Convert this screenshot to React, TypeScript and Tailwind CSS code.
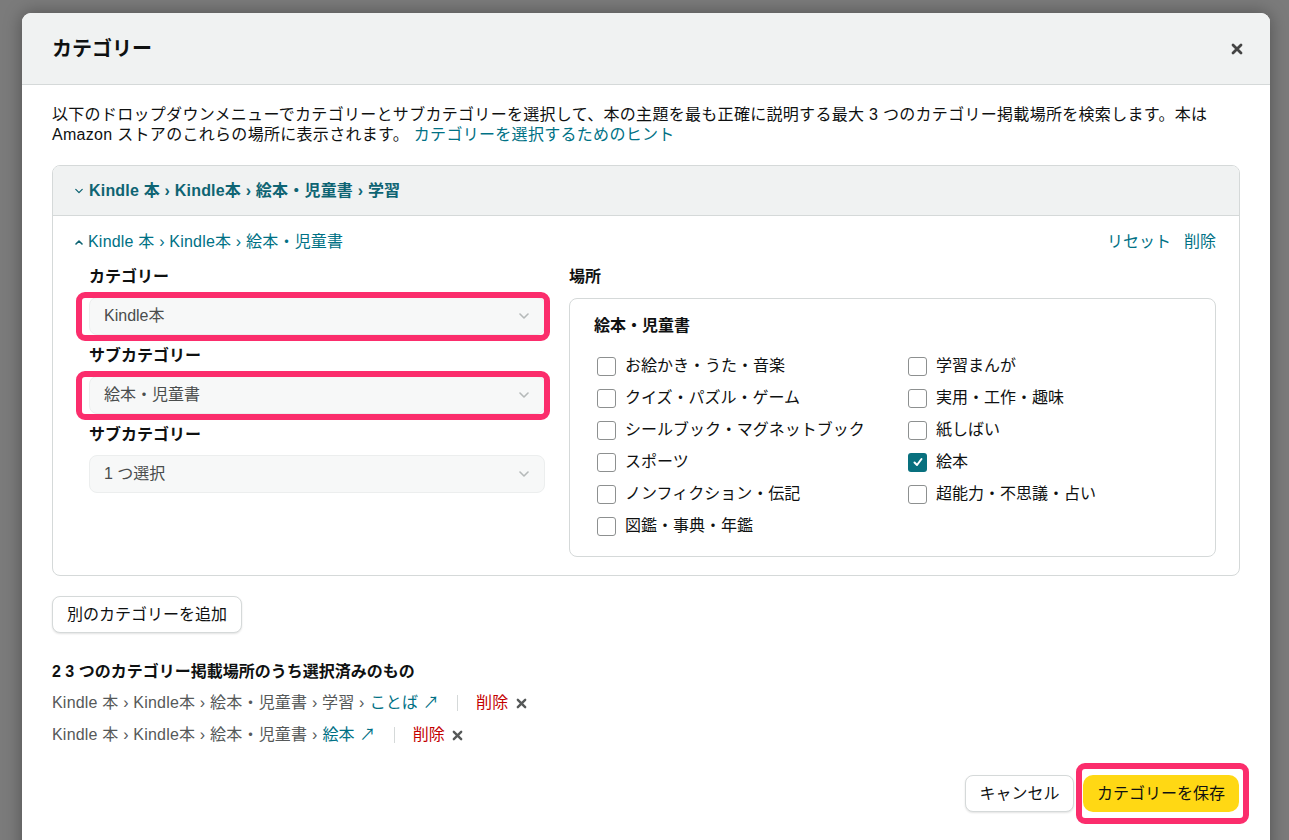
import React from "react";

const FONT = { fontFamily: '"Liberation Sans", "Noto Sans CJK JP", sans-serif' };

function ChevronDown({ className = "" }: { className?: string }) {
  return (
    <svg width="10" height="6" viewBox="0 0 10 6" className={className}>
      <path d="M1 1l4 4 4-4" fill="none" stroke="currentColor" strokeWidth="1.6" strokeLinecap="round" strokeLinejoin="round" />
    </svg>
  );
}

function ChevronUp({ className = "" }: { className?: string }) {
  return (
    <svg width="8" height="5" viewBox="0 0 8 5" className={className}>
      <path d="M1 4l3-3 3 3" fill="none" stroke="currentColor" strokeWidth="1.6" strokeLinecap="round" strokeLinejoin="round" />
    </svg>
  );
}

function XIcon({ size = 11, stroke = 2.6, className = "" }: { size?: number; stroke?: number; className?: string }) {
  return (
    <svg width={size} height={size} viewBox="0 0 12 12" className={className}>
      <path d="M2 2l8 8M10 2l-8 8" fill="none" stroke="currentColor" strokeWidth={stroke} strokeLinecap="round" />
    </svg>
  );
}

function Highlight({ className }: { className: string }) {
  return <div className={"pointer-events-none absolute border-[6px] border-[#fb2d6c] rounded-[9px] " + className} />;
}

function Select({ value, highlight }: { value: string; highlight?: boolean }) {
  return (
    <div className="relative flex h-[38px] items-center justify-between rounded-lg border border-[#eceeee] bg-[#f7f8f8] pl-[14px] pr-[15px] text-[16px] text-[#4a4d4d]">
      <span>{value}</span>
      <ChevronDown className="text-[#b5b9b9]" />
      {highlight && <Highlight className="-left-[14px] -right-[6px] -top-[6px] -bottom-[7px]" />}
    </div>
  );
}

function Checkbox({ label, checked }: { label: string; checked?: boolean }) {
  return (
    <div className="flex h-[32px] items-center gap-[9px]">
      {checked ? (
        <div className="ml-[3px] flex h-[19px] w-[19px] items-center justify-center rounded-[3px] bg-[#08707e]">
          <svg width="12" height="12" viewBox="0 0 12 12">
            <path d="M2.5 6.5l2.5 2.5 4.5-6" fill="none" stroke="white" strokeWidth="2" strokeLinecap="round" strokeLinejoin="round" />
          </svg>
        </div>
      ) : (
        <div className="ml-[3px] h-[19px] w-[19px] rounded-[3px] border border-[#8d9090] bg-white" />
      )}
      <span className="text-[16px] text-[#0f1111]">{label}</span>
    </div>
  );
}

export default function App() {
  const left = ["お絵かき・うた・音楽", "クイズ・パズル・ゲーム", "シールブック・マグネットブック", "スポーツ", "ノンフィクション・伝記", "図鑑・事典・年鑑"];
  const right = ["学習まんが", "実用・工作・趣味", "紙しばい", "絵本", "超能力・不思議・占い"];
  return (
    <div style={FONT} className="h-[840px] w-full overflow-hidden bg-[#7b7b7b] pl-[22px] pt-[13px] text-[#0f1111]">
      <div className="w-[1248px] h-[900px] rounded-t-[9px] bg-white shadow-[0_0_18px_rgba(0,0,0,0.35)] overflow-hidden">
        {/* header */}
        <div className="flex h-[72px] items-center justify-between border-b border-[#d5d9d9] bg-[#f0f2f2] pl-[30px] pr-[27px]">
          <h1 className="text-[20px] font-bold leading-none">カテゴリー</h1>
          <XIcon size={12} stroke={2.8} className="text-[#444]" />
        </div>

        <div className="px-[30px]">
          <p className="pt-[20px] text-[16px] leading-[20px] tracking-[0.3px]">
            以下のドロップダウンメニューでカテゴリーとサブカテゴリーを選択して、本の主題を最も正確に説明する最大 3 つのカテゴリー掲載場所を検索します。本は Amazon ストアのこれらの場所に表示されます。{" "}
            <span className="text-[#007185]">カテゴリーを選択するためのヒント</span>
          </p>

          {/* accordion */}
          <div className="mt-[20px] overflow-hidden rounded-lg border border-[#d5d9d9]">
            <div className="flex h-[50px] items-center gap-[6px] border-b border-[#d5d9d9] bg-[#f0f2f2] pl-[22px] text-[16px] font-bold text-[#0e6473]">
              <ChevronDown className="w-[8px] text-[#0e6473]" />
              <span className="tracking-[0.2px]">Kindle 本 › Kindle本 › 絵本・児童書 › 学習</span>
            </div>
            <div className="pb-[18px] pl-[22px] pr-[23px] pt-[16px]">
              <div className="flex h-[20px] items-center justify-between text-[16px] text-[#007185]">
                <div className="flex items-center gap-[5px]">
                  <ChevronUp className="text-[#0e6473]" />
                  <span className="tracking-[0.2px]">Kindle 本 › Kindle本 › 絵本・児童書</span>
                </div>
                <div className="flex gap-[13px]">
                  <span>リセット</span>
                  <span>削除</span>
                </div>
              </div>
              <div className="mt-[15px] grid grid-cols-[456px_1fr] gap-[24px] pl-[14px]">
                <div>
                  <div className="mb-[10px] text-[16px] font-bold leading-[20px]">カテゴリー</div>
                  <Select value="Kindle本" highlight />
                  <div className="mb-[10px] mt-[11px] text-[16px] font-bold leading-[20px]">サブカテゴリー</div>
                  <Select value="絵本・児童書" highlight />
                  <div className="mb-[10px] mt-[11px] text-[16px] font-bold leading-[20px]">サブカテゴリー</div>
                  <Select value="1 つ選択" />
                </div>
                <div>
                  <div className="text-[16px] font-bold leading-[20px]">場所</div>
                  <div className="mt-[11px] rounded-lg border border-[#d5d9d9] pb-[14px] pl-[24px] pt-[17px]">
                    <div className="text-[16px] font-bold leading-[20px]">絵本・児童書</div>
                    <div className="mt-[14px] grid grid-cols-[311px_1fr]">
                      <div>
                        {left.map((l) => (
                          <Checkbox key={l} label={l} />
                        ))}
                      </div>
                      <div>
                        {right.map((l) => (
                          <Checkbox key={l} label={l} checked={l === "絵本"} />
                        ))}
                      </div>
                    </div>
                  </div>
                </div>
              </div>
            </div>
          </div>

          <button className="mt-[20px] h-[37px] rounded-lg border border-[#d5d9d9] bg-white px-[14px] text-[16px] shadow-[0_1px_2px_rgba(15,17,17,0.12)]">
            別のカテゴリーを追加
          </button>

          <div className="mt-[29px] text-[16px] font-bold leading-[20px]">2 3 つのカテゴリー掲載場所のうち選択済みのもの</div>
          <div className="mt-[11px] flex h-[20px] items-center text-[16px] text-[#565959] tracking-[0.2px]">
            <span>Kindle 本 › Kindle本 › 絵本・児童書 › 学習 › </span>
            <span className="ml-[5px] text-[#007185]">ことば ↗</span>
            <span className="mx-[18px] h-[16px] w-px bg-[#d5d9d9]" />
            <span className="text-[#c40000]">削除</span>
            <XIcon size={11} stroke={2.6} className="ml-[7px] text-[#565959]" />
          </div>
          <div className="mt-[12px] flex h-[20px] items-center text-[16px] text-[#565959] tracking-[0.2px]">
            <span>Kindle 本 › Kindle本 › 絵本・児童書 › </span>
            <span className="ml-[5px] text-[#007185]">絵本 ↗</span>
            <span className="mx-[18px] h-[16px] w-px bg-[#d5d9d9]" />
            <span className="text-[#c40000]">削除</span>
            <XIcon size={11} stroke={2.6} className="ml-[7px] text-[#565959]" />
          </div>

          <div className="mt-[30px] flex justify-end gap-[9px] pr-px">
            <button className="h-[37px] w-[109px] rounded-lg border border-[#d5d9d9] bg-white text-[16px] shadow-[0_1px_2px_rgba(15,17,17,0.12)]">
              キャンセル
            </button>
            <div className="relative">
              <button className="h-[37px] w-[156px] rounded-[10px] bg-[#ffd814] text-[16px]">カテゴリーを保存</button>
              <Highlight className="-left-[7px] -right-[10px] -top-[12px] -bottom-[12px] border-[6px]" />
            </div>
          </div>
        </div>
      </div>
    </div>
  );
}
